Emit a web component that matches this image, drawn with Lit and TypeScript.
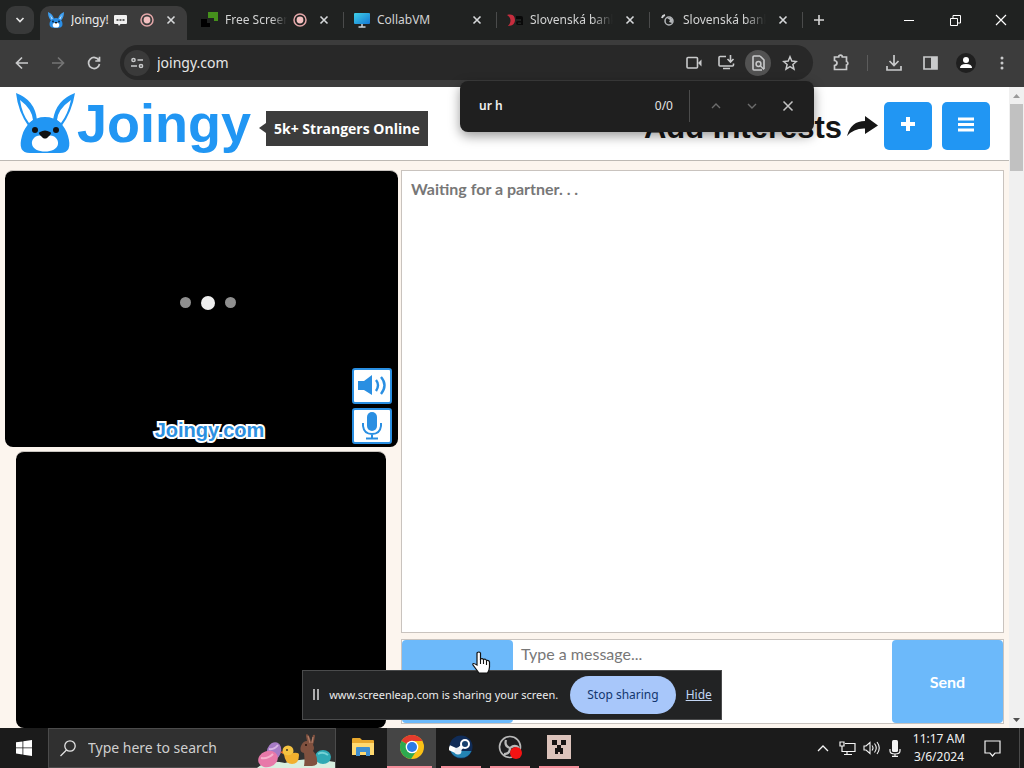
import { LitElement, html, css, svg, nothing } from "lit";
import { customElement, property } from "lit/decorators.js";
import { classMap } from "lit/directives/class-map.js";

const icon = (w: number, h: number, body: unknown, vb = `0 0 ${w} ${h}`) =>
  html`<svg width=${w} height=${h} viewBox=${vb} fill="none" aria-hidden="true">${body}</svg>`;

const bunnyFav = icon(16, 16, svg`
  <path d="M0 0 Q5 2 6 7 L3.500 9 Q0 6 0 0Z M16 0 Q11 2 10 7 L12.500 9 Q16 6 16 0Z" fill="#3f9ff0"/>
  <path d="M2 3 L5 7 L4 8Z M14 3 L11 7 L12 8Z" fill="#d8ecff"/>
  <path d="M8 6 C12 6 14.500 9 14.500 12 C14.500 15 12.500 16 8 16 C3.500 16 1.500 15 1.500 12 C1.500 9 4 6 8 6Z" fill="#2b8ee6"/>
  <ellipse cx="8" cy="13" rx="3.300" ry="2.600" fill="#fff"/>
  <path d="M6.500 10 h3 l-1.500 2z" fill="#111"/><circle cx="5" cy="9.500" r="1" fill="#0b2d4f"/><circle cx="11" cy="9.500" r="1" fill="#0b2d4f"/>`);
const leapFav = icon(17, 16, svg`<path d="M0 7h6v4h3v4H0z" fill="#000"/><path d="M7 0h10v9h-4V6H7z" fill="#45901c"/>`);
const vmFav = icon(16, 16, svg`
  <defs><linearGradient id="vm" x1="0" y1="0" x2="1" y2="1"><stop offset="0" stop-color="#3fd0e8"/><stop offset="1" stop-color="#1477d4"/></linearGradient></defs>
  <rect y="1" width="16" height="11" rx="1" fill="url(#vm)"/><path d="M8 12v3M4.500 15h7" stroke="#c9d4dc" stroke-width="1.500"/>`);
const bankFav = icon(16, 16, svg`<path d="M0 3 C7 1 8 6 8 8 C8 11 6 14 1 14 C4 11 5 6 0 3Z" fill="#c62d3e"/>
  <path d="M9 4h5q2 0 2 2v7h-5q-2 0-2-2 q0-2 2-2h3v-2H9zM11 10.500v1.500h3v-1.500z" fill="#090909"/>`);
const globeFav = icon(16, 16, svg`<circle cx="9" cy="9" r="4" stroke="#b4b7ba" stroke-width="1.500"/>
  <path d="M7 6l3 2-1 2 3 1 1-3-2-2z" fill="#b4b7ba"/><path d="M2 6a4 4 0 0 1 3-3" stroke="#d2d4d6" stroke-width="2"/>`);
const chat = icon(13, 11, svg`<path d="M1 0h11q1 0 1 1v7q0 1-1 1H6.500l-1.500 2-1-2H1q-1 0-1-1V1q0-1 1-1z" fill="#f1f1f1"/>
  <path d="M2.500 5h2M5.500 5h2M8.500 5h2" stroke="#333" stroke-width="1.600"/>`);
const rec = icon(14, 14, svg`<circle cx="7" cy="7" r="6" stroke="#e3a6a8" stroke-width="1.500"/><circle cx="7" cy="7" r="3.400" fill="#f3c0c0"/>`);
const close = icon(10, 10, svg`<path d="M1.500 1.500l7 7M8.500 1.500l-7 7" stroke="#d6d8da" stroke-width="1.600"/>`);

@customElement("browser-tab")
class BrowserTab extends LitElement {
  @property() label = "";
  @property({ type: Boolean }) active = false;
  @property({ type: Boolean }) recording = false;
  @property({ type: Boolean }) bubble = false;
  @property({ attribute: false }) favicon: unknown = nothing;
  static styles = css`
    :host { display: block; flex: 0 1 153px; min-width: 0; padding-right: 6px; box-sizing: border-box; position: relative; }
    .tab { height: 34px; display: flex; align-items: center; padding: 0 11px 6px 8px; border-radius: 10px 10px 0 0; box-sizing: border-box; font: 12px/18px "Noto Sans", sans-serif; color: #d2d3d3; }
    .active { background: #3c3c3c; color: #ececec; }
    .line { border-right: 1px solid #4a4b4b; height: 16px; position: absolute; right: 2px; top: 6px; }
    .title { flex: 1; min-width: 0; margin-left: 7px; overflow: hidden; white-space: nowrap; display: flex; gap: 5px; align-items: center; }
    .fade { -webkit-mask-image: linear-gradient(90deg, #000 75%, transparent); mask-image: linear-gradient(90deg, #000 75%, transparent); }
    .rec { margin-left: 6px; display: flex; }
    button { border: 0; background: none; padding: 0; display: flex; margin-left: 12px; }
    svg { flex: none; display: block; }
  `;
  render() {
    return html`<div class=${classMap({ tab: true, active: this.active })} role="tab" aria-selected=${this.active}>
        ${this.favicon}
        <span class=${classMap({ title: true, fade: this.label.length > 9 })}>${this.label}${this.bubble ? chat : nothing}</span>
        ${this.recording ? html`<span class="rec">${rec}</span>` : nothing}
        <button aria-label="Close tab">${close}</button>
      </div>
      ${this.active ? nothing : html`<span class="line"></span>`}`;
  }
}

@customElement("browser-chrome")
class BrowserChrome extends LitElement {
  static styles = css`
    :host { display: block; position: relative; z-index: 3; font-family: "Noto Sans", sans-serif; }
    * { box-sizing: border-box; }
    svg { display: block; flex: none; }
    button { border: 0; background: none; padding: 0; display: grid; place-items: center; color: inherit; }
    .strip { background: #202221; height: 40px; display: flex; padding-top: 6px; }
    .down { width: 28px; height: 28px; margin: 0 6px; border-radius: 9px; background: #383939; }
    .tabs { display: flex; flex: 0 1 765px; min-width: 0; }
    .new { width: 28px; height: 28px; }
    .win { margin-left: auto; display: flex; height: 28px; }
    .win button { width: 46px; }
    .bar { background: #3c3c3c; height: 47px; display: flex; align-items: center; padding: 0 8px 2px 8px; }
    .nav { width: 28px; height: 34px; margin-right: 8px; }
    .omni { flex: 1; height: 35px; border-radius: 18px; background: #282828; display: flex; align-items: center; padding: 0 10px 0 4px; margin-left: 4px; }
    .site { width: 26px; height: 26px; border-radius: 50%; background: #3a3a3a; }
    .url { flex: 1; min-width: 0; border: 0; background: none; outline: 0; color: #e6e6e6; font: 14px/20px "Noto Sans", sans-serif; padding: 0 0 0 7px; }
    .act { width: 26px; height: 26px; border-radius: 50%; margin-left: 6px; }
    .lit { background: #525252; }
    .tools { display: flex; align-items: center; margin-left: 14px; }
    .tools button { width: 28px; height: 28px; margin-right: 8px; }
    .tools .more { margin: 0; }
    .sep { width: 1px; height: 16px; background: #5c5c5c; margin: 0 12px 0 4px; }
    .find { position: absolute; top: 81px; right: 210px; width: 354px; height: 51px; background: #1f1f1f; border-radius: 8px; display: flex; align-items: center; padding: 0 12px 2px 19px; box-shadow: 0 4px 12px rgba(0,0,0,.4); color: #e3e3e3; font: 12px/18px "Noto Sans", sans-serif; }
    .find input { flex: 1; min-width: 0; border: 0; background: none; outline: 0; padding: 0; color: #f0f0f0; font: 600 12px/18px "Noto Sans", sans-serif; }
    .rule { width: 1px; height: 32px; background: #4b4b4b; margin: 0 12px 0 16px; }
    .find button { width: 28px; height: 28px; }
    .find button + button { margin-left: 8px; }
  `;
  render() {
    const g = "#c9cacb";
    return html`
      <div class="strip">
        <button class="down" aria-label="Search tabs">${icon(10, 8, svg`<path d="M1.500 2l3.500 3.500L8.500 2" stroke="#e4e4e4" stroke-width="1.700"/>`)}</button>
        <div class="tabs" role="tablist">
          <browser-tab label="Joingy!" active recording bubble .favicon=${bunnyFav}></browser-tab>
          <browser-tab label="Free Screen" recording .favicon=${leapFav}></browser-tab>
          <browser-tab label="CollabVM" .favicon=${vmFav}></browser-tab>
          <browser-tab label="Slovenská bank" .favicon=${bankFav}></browser-tab>
          <browser-tab label="Slovenská bank" .favicon=${globeFav}></browser-tab>
        </div>
        <button class="new" aria-label="New tab">${icon(12, 12, svg`<path d="M6 1v10M1 6h10" stroke="#d6d6d6" stroke-width="1.600"/>`)}</button>
        <div class="win">
          <button aria-label="Minimize">${icon(10, 10, svg`<path d="M0 5.500h10" stroke="#fff"/>`)}</button>
          <button aria-label="Restore">${icon(11, 11, svg`<path d="M.5 3.500h7v7h-7zM3 3.500v-3h7.500v7.500h-3" stroke="#fff"/>`)}</button>
          <button aria-label="Close">${icon(12, 12, svg`<path d="M1 1l10 10M11 1L1 11" stroke="#fff" stroke-width="1.200"/>`)}</button>
        </div>
      </div>
      <div class="bar">
        <button class="nav" aria-label="Back">${icon(14, 14, svg`<path d="M13 7H2M7 1.500L1.500 7L7 12.500" stroke=${g} stroke-width="1.700"/>`)}</button>
        <button class="nav" aria-label="Forward">${icon(14, 14, svg`<path d="M1 7h11M7 1.500L12.500 7L7 12.500" stroke="#747474" stroke-width="1.700"/>`)}</button>
        <button class="nav" aria-label="Reload">${icon(14, 14, svg`<path d="M12 4.500A5.500 5.500 0 1 0 12.500 8M12.500 .8V5H8.300" stroke=${g} stroke-width="1.700"/>`)}</button>
        <div class="omni">
          <button class="site" aria-label="Site information">${icon(13, 12, svg`<circle cx="2.500" cy="3" r="1.600" stroke=${g} stroke-width="1.500"/><path d="M6.500 3H12M0 9h6" stroke=${g} stroke-width="1.700"/><circle cx="10" cy="9" r="1.600" stroke=${g} stroke-width="1.500"/>`)}</button>
          <input class="url" aria-label="Address" value="joingy.com" />
          <button class="act" aria-label="Camera">${icon(16, 14, svg`<rect x="1" y="1.500" width="10.500" height="10.500" rx="1" stroke=${g} stroke-width="1.600"/><path d="M12 7l3.500-3.500v7z" fill=${g}/>`)}</button>
          <button class="act" aria-label="Install">${icon(17, 15, svg`<path d="M8 1.500H2q-1 0-1 1V10q0 1 1 1h12.500q1 0 1-1V8.500M5 13.500h7M12.500 0v6.500M9.500 4l3 3 3-3" stroke=${g} stroke-width="1.600"/>`)}</button>
          <button class="act lit" aria-label="Find in page">${icon(13, 16, svg`<path d="M8 1H2q-1 0-1 1v12q0 1 1 1h8M8 1l4 4v9" stroke=${g} stroke-width="1.600"/><circle cx="6.500" cy="9" r="2.400" stroke=${g} stroke-width="1.500"/><path d="M8 10.500l4 4" stroke=${g} stroke-width="1.500"/>`)}</button>
          <button class="act" aria-label="Bookmark">${icon(16, 16, svg`<path d="M8 1.800l1.800 4.300 4.600.4-3.500 3 1.100 4.600L8 11.700l-4 2.400 1.100-4.600-3.500-3 4.600-.4z" stroke=${g} stroke-width="1.500"/>`)}</button>
        </div>
        <div class="tools">
          <button aria-label="Extensions">${icon(17, 17, svg`<path d="M1.500 3h4.200a1.800 1.800 0 0 1 3.600 0h4.200v4.500a1.800 1.800 0 0 1 0 3.500v4.500h-12v-4q2.500-.5 2.500-2.500T1.500 6.500z" stroke=${g} stroke-width="1.700"/>`)}</button>
          <span class="sep"></span>
          <button aria-label="Downloads">${icon(16, 16, svg`<path d="M8 0v10M3.500 6L8 10.500 12.500 6M1 11v4h14v-4" stroke=${g} stroke-width="1.700"/>`)}</button>
          <button aria-label="Side panel">${icon(15, 14, svg`<path d="M1 1h13v12H1z" stroke=${g} stroke-width="1.700"/><path d="M8 1h6v12H8z" fill=${g}/>`)}</button>
          <button aria-label="Profile">${icon(20, 20, svg`<circle cx="10" cy="10" r="10" fill="#1f1f1f"/><circle cx="10" cy="7" r="3" fill="#fff"/><path d="M4 15q0-4 6-4t6 4z" fill="#fff"/>`)}</button>
          <button class="more" aria-label="Menu">${icon(4, 14, svg`<circle cx="2" cy="2" r="1.500" fill=${g}/><circle cx="2" cy="7" r="1.500" fill=${g}/><circle cx="2" cy="12" r="1.500" fill=${g}/>`)}</button>
        </div>
      </div>
      <div class="find" role="search">
        <input aria-label="Find" value="ur h" />
        <span>0/0</span><span class="rule"></span>
        <button aria-label="Previous">${icon(10, 8, svg`<path d="M1 6l4-4 4 4" stroke="#6c6c6c" stroke-width="1.400"/>`)}</button>
        <button aria-label="Next">${icon(10, 8, svg`<path d="M1 2l4 4 4-4" stroke="#6c6c6c" stroke-width="1.400"/>`)}</button>
        <button aria-label="Close find bar">${icon(12, 12, svg`<path d="M1.500 1.500l9 9M10.500 1.500l-9 9" stroke="#c4c4c4" stroke-width="1.500"/>`)}</button>
      </div>`;
  }
}

const bunny = icon(60, 62, svg`
  <path d="M1 1 Q20 8 22 28 L14 35 Q3 20 1 1Z M60 1 Q41 8 38 28 L46 35 Q57 20 60 1Z" fill="#2196f3"/>
  <path d="M5 8 Q17 17 18 28 L14 31 Q7 22 5 8Z M56 8 Q43 17 42 28 L46 31 Q53 22 56 8Z" fill="#fff"/>
  <path d="M30 25 C42 25 50 33 53 44 Q58 61 45 61 H15 Q2 61 7 44 C10 33 18 25 30 25Z" fill="#2196f3"/>
  <path d="M30 46 C36 40 44 46 43 52 C42 62 18 62 17 52 C16 46 24 40 30 46Z" fill="#fff"/>
  <circle cx="20" cy="38" r="3" fill="#111"/><circle cx="41" cy="38" r="3" fill="#111"/>
  <path d="M25 40q5-3 10 0 2 1 0 3l-3 3q-2 1-4 0l-3-3q-2-2 0-3z" fill="#111"/>`);

@customElement("joingy-page")
class JoingyPage extends LitElement {
  static styles = css`
    :host { display: flex; flex: 1; min-height: 0; font-family: Lato, sans-serif; }
    * { box-sizing: border-box; }
    svg { display: block; flex: none; }
    .page { flex: 1; min-width: 0; display: flex; flex-direction: column; background: #fcf5ee; }
    header { background: #fff; border-bottom: 1px solid #bdb9b4; display: flex; align-items: center; height: 74px; padding: 5px 19px 0 15px; flex: none; }
    .logo { display: flex; align-items: center; gap: 2px; text-decoration: none; color: #2196f3; font: 700 54px/62px "Liberation Sans", sans-serif; margin-right: 8px; padding-bottom: 6px; white-space: nowrap; }
    .badge { display: flex; align-items: center; white-space: nowrap; margin-top: 4px; color: #fff; font: 700 14px/35px "Open Sans", sans-serif; }
    .badge::before { content: ""; border: 5px solid transparent; border-right: 7px solid #3c3c3c; border-left: 0; }
    .count { background: #3c3c3c; padding: 0 8px; }
    .right { margin-left: auto; display: flex; align-items: center; }
    .add { font: 700 31px/44px "Liberation Sans", sans-serif; color: #161616; white-space: nowrap; margin-right: 5px; padding-top: 4px; }
    .sq { width: 48px; height: 48px; border: 0; padding: 0; border-radius: 5px; background: #2196f3; display: grid; place-items: center; margin-left: 10px; }
    .arrow + .sq { margin-left: 6px; }
    .main { flex: 1; min-height: 0; display: grid; grid-template-columns: 393fr 603fr; column-gap: 3px; padding: 9px 5px 0; }
    .videos { display: grid; grid-template-rows: 1fr 1fr; gap: 4px; min-height: 0; }
    .video { background: #000; border-radius: 8px; display: grid; grid-template-columns: 1fr auto; grid-template-rows: 1fr auto; padding: 4px 6px 3px; border: 1px solid #c9c4bf; border-width: 1px 0 0; }
    .own { margin: 0 12px 0 11px; }
    .dots { grid-column: 1 / 3; display: flex; align-items: center; justify-content: center; gap: 10px; padding: 62px 0 0 12px; }
    .dot { width: 11px; height: 11px; border-radius: 50%; background: #8f8f8f; }
    .big { width: 14px; height: 14px; background: #eee; }
    .mark { align-self: end; text-align: center; padding-left: 56px; font: 700 20px/27px "Liberation Sans", sans-serif; color: #2c8fe0; -webkit-text-stroke: 4px #fff; paint-order: stroke fill; }
    .ctl { display: grid; gap: 4px; }
    .ctl button { width: 40px; height: 36px; border: 2px solid #2a8fe2; border-radius: 3px; background: #fff; padding: 0; display: grid; place-items: center; }
    .chat { display: flex; flex-direction: column; gap: 6px; padding-bottom: 4px; min-width: 0; }
    .log { flex: 1; background: #fff; border: 1px solid #c9c3be; padding: 6px 9px; color: #777; font: 700 16px/24px Lato, sans-serif; }
    .log p { margin: 0; }
    form { height: 85px; display: flex; border: 1px solid #c9c3be; background: #fff; }
    form button { width: 111px; flex: none; border: 0; border-radius: 4px; background: #6cb9fa; color: #fff; font: 700 16px/24px Lato, sans-serif; }
    textarea { flex: 1; min-width: 0; border: 0; resize: none; outline: 0; padding: 2px 8px; font: 16px/24px Lato, sans-serif; background: none; }
    textarea::placeholder { color: #777; opacity: 1; }
    .scroll { width: 15px; background: #f0f0f0; display: flex; flex-direction: column; align-items: center; justify-content: space-between; padding: 6px 0 5px; }
    .thumb { width: 13px; height: 67px; background: #c1c1c1; margin-top: 6px; margin-bottom: auto; }
  `;
  render() {
    const b = "#2a8fe2";
    return html`
      <div class="page">
        <header>
          <a class="logo" href="#">${bunny}<span>Joingy</span></a>
          <span class="badge"><span class="count">5k+ Strangers Online</span></span>
          <div class="right">
            <span class="add">Add Interests</span>
            <span class="arrow">${icon(31, 21, svg`<path d="M0 20Q4 5 18 5V0L31 9.500 18 18V12.500Q7 12 0 20Z" fill="#161616"/>`)}</span>
            <button class="sq" aria-label="Add interest">${icon(14, 18, svg`<path d="M7 0v14M0 7h14" stroke="#fff" stroke-width="4"/>`)}</button>
            <button class="sq" aria-label="Menu">${icon(16, 18, svg`<path d="M0 2h16M0 7.500h16M0 13h16" stroke="#fff" stroke-width="3"/>`)}</button>
          </div>
        </header>
        <div class="main">
          <section class="videos">
            <div class="video">
              <div class="dots"><i class="dot"></i><i class="dot big"></i><i class="dot"></i></div>
              <div class="mark">Joingy.com</div>
              <div class="ctl">
                <button aria-label="Volume">${icon(30, 22, svg`<path d="M1 6h6l8-6v20l-8-5H1z" fill=${b}/><path d="M19 5q4 5 0 11M24 2q7 8 0 17" stroke=${b} stroke-width="2.400"/>`)}</button>
                <button aria-label="Microphone">${icon(22, 30, svg`<rect x="6" y="1" width="10" height="19" rx="5" fill=${b}/><path d="M2 12v3q1 8 9 8t9-8v-3M11 23v4M5 27.500h12" stroke=${b} stroke-width="2"/>`)}</button>
              </div>
            </div>
            <div class="video own"></div>
          </section>
          <section class="chat">
            <div class="log"><p>Waiting for a partner. . .</p></div>
            <form @submit=${(e: Event) => e.preventDefault()}>
              <button type="button" aria-label="New partner"></button>
              <textarea aria-label="Message" placeholder="Type a message..."></textarea>
              <button>Send</button>
            </form>
          </section>
        </div>
      </div>
      <div class="scroll">
        ${icon(7, 5, svg`<path d="M0 5l3.500-4L7 5z" fill="#9a9a9a"/>`)}
        <span class="thumb"></span>
        ${icon(7, 5, svg`<path d="M0 0l3.500 4L7 0z" fill="#505050"/>`)}
      </div>`;
  }
}

@customElement("share-notice")
class ShareNotice extends LitElement {
  static styles = css`
    :host { position: absolute; left: 0; right: 0; bottom: 48px; z-index: 4; display: flex; justify-content: center; pointer-events: none; }
    .box { height: 50px; box-sizing: border-box; background: #222324; border: 1px solid #4a4b4c; display: flex; align-items: center; padding: 0 9px; color: #ececec; font: 12px/18px "Noto Sans", sans-serif; white-space: nowrap; pointer-events: auto; }
    .msg { margin: 0 12px 0 9px; font-size: 11px; }
    button { height: 38px; border: 0; border-radius: 19px; padding: 0 17px; background: #a8c7fa; color: #12366e; font: 12px/18px "Noto Sans", sans-serif; }
    a { color: #c3d6f4; margin-left: 10px; }
  `;
  render() {
    return html`<div class="box">
      ${icon(8, 12, svg`<path d="M2 0v11M6 0v11" stroke="#ddd" stroke-width="1.500"/>`)}
      <span class="msg">www.screenleap.com is sharing your screen.</span>
      <button>Stop sharing</button><a href="#">Hide</a></div>`;
  }
}

const easter = icon(78, 39, svg`
  <path d="M0 39Q10 30 28 34Q50 27 78 33V39z" fill="#d8efe0"/>
  <ellipse cx="17" cy="22" rx="7" ry="9" transform="rotate(20 17 22)" fill="#a77bc6"/><path d="M12 20q5 1 9-4" stroke="#d9b6e6" stroke-width="2"/>
  <ellipse cx="11" cy="30" rx="10" ry="8" transform="rotate(-20 11 30)" fill="#e879a9"/><path d="M4 29q7 1 12-4" stroke="#f6b2cd" stroke-width="2"/>
  <ellipse cx="66" cy="28" rx="8" ry="7" fill="#2fa9b4"/><path d="M61 25q5-3 10 1" stroke="#74d2d5" stroke-width="2"/>
  <circle cx="31" cy="22" r="5.500" fill="#f5c341"/><path d="M27 25q5 3 9-1 6-1 6 2 0 9-7 9-7 0-8-10z" fill="#f2b02e"/><path d="M26 22l-3 1 3 2z" fill="#e8702d"/><circle cx="30" cy="21" r="1" fill="#432"/>
  <path d="M44 17q2-5 6-5L49 7q0-2 1-2 3 2 4 8l2-7q2-1 2 1-1 6-2 9 2 3 0 6 5 5 4 13-2 2-5 2H47q1-6 0-13-5-1-3-7z" fill="#80513f"/><path d="M51 7l2 7M56 8l-1 6" stroke="#b07e69" stroke-width="1.200"/><circle cx="49" cy="16" r="1" fill="#24120c"/>`);

const apps = [
  { name: "File Explorer", open: false, art: icon(22, 20, svg`<path d="M0 2q0-1 1-1h7l2 2h11q1 0 1 1v14H0z" fill="#e8a82d"/><path d="M0 6h22v12H0z" fill="#ffd970"/><path d="M4 19v-8q0-1 1-1h12q1 0 1 1v8h-4v-4H8v4z" fill="#3f8fd0"/>`) },
  { name: "Chrome", open: true, art: icon(24, 24, svg`<circle cx="12" cy="12" r="12" fill="#fbc116"/><path d="M12 12L1.600 6A12 12 0 0 1 22.400 6H12z" fill="#e33b2e"/><path d="M1.600 6A12 12 0 0 0 11 24l6-9-5-3z" fill="#2da94f"/><circle cx="12" cy="12" r="6.300" fill="#fff"/><circle cx="12" cy="12" r="5" fill="#2c7be5"/>`) },
  { name: "Steam", open: true, art: icon(24, 24, svg`<circle cx="12" cy="12" r="11.500" fill="#102c58"/><path d="M1.500 16a11.500 11.500 0 0 0 21 0z" fill="#2383b3"/><path d="M0 12.500l9 4" stroke="#fff" stroke-width="5"/><path d="M8 16l7-6" stroke="#fff" stroke-width="4"/><circle cx="16" cy="9" r="4" fill="#17406d" stroke="#fff" stroke-width="2"/><circle cx="9" cy="16" r="3.500" fill="#e8eef5"/>`) },
  { name: "OBS Studio", open: true, art: icon(24, 24, svg`<circle cx="12" cy="12" r="10.500" fill="#1e1e20" stroke="#b9b9b9" stroke-width="1.600"/><path d="M12 13q-6-2-4-8M12 13q5-4 9 0M12 13q0 6-6 6" stroke="#b9b9b9" stroke-width="2.200"/><circle cx="18" cy="18" r="6" fill="#f51313"/>`) },
  { name: "Minecraft", open: true, art: icon(24, 24, svg`<path d="M0 0h24v24H0z" fill="#dcc3bb"/><path d="M5 5h5v5H5zM14 5h5v5h-5zM10 10h4v3h2v6h-3v-2h-2v2H8v-6h2z" fill="#171313"/>`) },
];

@customElement("task-bar")
class TaskBar extends LitElement {
  static styles = css`
    :host { display: flex; height: 40px; flex: none; background: #1b1b1b; font: 12px/18px "Noto Sans", sans-serif; color: #f2f2f2; position: relative; z-index: 2; }
    * { box-sizing: border-box; }
    svg { display: block; flex: none; }
    button { border: 0; background: none; padding: 0; color: inherit; font: inherit; display: grid; place-items: center; }
    .start { width: 48px; }
    .search { flex: 0 1 288px; min-width: 0; background: #303030; border: 1px solid #4b4b4b; display: flex; align-items: center; padding: 0 0 0 11px; }
    .search input { flex: 1; min-width: 0; border: 0; background: none; outline: 0; padding: 0 0 0 12px; font: 14px/22px "Noto Sans", sans-serif; }
    .search input::placeholder { color: #cfcfcf; opacity: 1; }
    .apps { display: flex; margin-left: 2px; }
    .app { width: 49px; border-bottom: 2px solid transparent; position: relative; }
    .open::after { content: ""; position: absolute; left: 5px; right: 4px; bottom: -2px; height: 2px; background: #f58e9b; }
    .front { background: #454545; }
    .front::after { left: 0; }
    .tray { margin-left: auto; display: flex; align-items: center; }
    .tray button { width: 24px; height: 40px; }
    .tray .clock { width: 64px; }
    .tray .note { width: 42px; }
    .edge { width: 1px; height: 40px; background: #4a4a4a; margin-right: 4px; margin-left: 6px; }
  `;
  render() {
    const w = "#f4f4f4";
    return html`
      <button class="start" aria-label="Start">${icon(16, 16, svg`<path d="M0 2.300l6.500-.9v6.100H0zM7.300 1.300L16 0v7.500H7.300zM0 8.300h6.500v6.100L0 13.500zM7.300 8.300H16V16l-8.700-1.300z" fill="#fff"/>`)}</button>
      <label class="search">
        ${icon(16, 17, svg`<circle cx="10" cy="6" r="5.200" stroke="#e4e4e4" stroke-width="1.300"/><path d="M6.500 10L.5 16" stroke="#e4e4e4" stroke-width="1.300"/>`)}
        <input aria-label="Search" placeholder="Type here to search" />${easter}
      </label>
      <div class="apps">${apps.map((a) => html`<button class=${classMap({ app: true, open: a.open, front: a.name === "Chrome" })} aria-label=${a.name}>${a.art}</button>`)}</div>
      <div class="tray">
        <button aria-label="Hidden icons">${icon(12, 8, svg`<path d="M1 7l5-5 5 5" stroke=${w} stroke-width="1.300"/>`)}</button>
        <button aria-label="Network">${icon(17, 15, svg`<path d="M6 2.500h10v8H3V7M8 10.500v3M5 13.500h8M1 1h4v4H1zM3 5v3" stroke=${w} stroke-width="1.200"/>`)}</button>
        <button aria-label="Volume">${icon(17, 14, svg`<path d="M1 5h2l4-3.500v11L3 9H1zM9 4.500q2 2.500 0 5M11.500 2.500q3.500 4.500 0 9M14 1q4.500 6 0 12" stroke=${w} stroke-width="1.100"/>`)}</button>
        <button aria-label="Microphone">${icon(12, 17, svg`<rect x="3" y="0" width="6" height="12" rx="1.500" fill=${w}/><path d="M1 9v2q0 3 5 3t5-3V9M6 14v2M3 16.300h6" stroke=${w} stroke-width="1.200"/>`)}</button>
        <button class="clock"><span>11:17 AM<br />3/6/2024</span></button>
        <button class="note" aria-label="Notifications">${icon(17, 17, svg`<path d="M1 1h15v12h-5l-2.500 3L6 13H1z" stroke=${w} stroke-width="1.200"/>`)}</button>
        <span class="edge"></span>
      </div>`;
  }
}

@customElement("app-root")
class AppRoot extends LitElement {
  static styles = css`
    :host { display: flex; flex-direction: column; height: 100vh; position: relative; overflow: hidden; }
    .pointer { position: absolute; left: 472px; top: 651px; z-index: 5; pointer-events: none; }
  `;
  render() {
    return html`
      <browser-chrome></browser-chrome>
      <joingy-page></joingy-page>
      <share-notice></share-notice>
      <task-bar></task-bar>
      <div class="pointer">${icon(19, 24, svg`<path d="M5 2q2-2 3.500 0V8q2-1 3 .5 2-1 3 1 2.500-.5 3 1.500v5q0 3-2 6H7q-3-4-6-8-1-3 4 0z" fill="#fff" stroke="#111" stroke-width="1.200"/><path d="M8.500 8v5M11.500 9v4M14.500 10v4" stroke="#111" stroke-width="1.100"/>`)}</div>`;
  }
}
